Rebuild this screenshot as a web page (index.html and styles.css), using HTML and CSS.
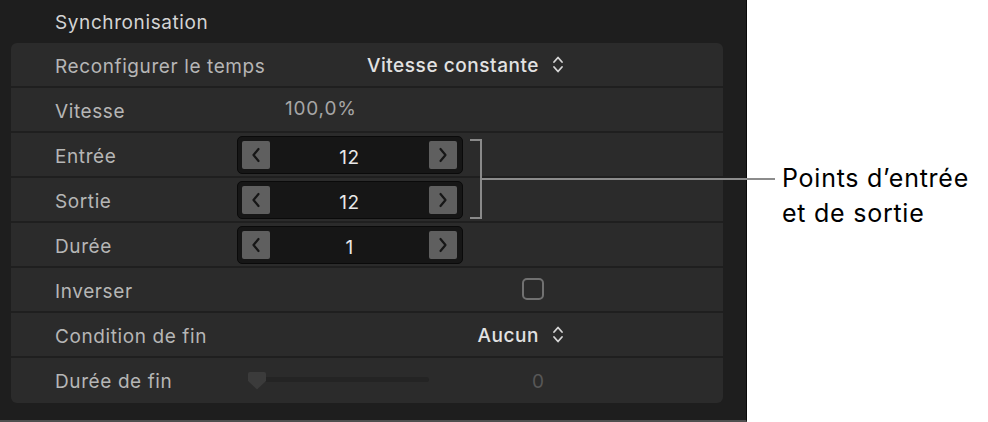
FILE: index.html
```html
<!DOCTYPE html>
<html lang="fr">
<head>
<meta charset="utf-8">
<title>Synchronisation</title>
<link rel="stylesheet" href="styles.css">
</head>
<body>
<div class="page">
  <section class="panel">
    <div class="header">Synchronisation</div>
    <div class="card">
      <div class="row">
        <span class="label">Reconfigurer le temps</span>
        <div class="ctl end">
          <span class="popup">Vitesse constante</span>
          <svg class="updown" viewBox="0 0 12 19" width="12" height="19"><path d="M2 7 L6 2.5 L10 7 M2 12 L6 16.5 L10 12"/></svg>
        </div>
      </div>
      <div class="row">
        <span class="label">Vitesse</span>
        <div class="ctl value-cell"><span class="value">100,0%</span></div>
      </div>
      <div class="row">
        <span class="label">Entrée</span>
        <div class="ctl">
          <div class="stepper">
            <span class="step-btn"><svg viewBox="0 0 10 16" width="10" height="16"><path d="M7.5 2 L2.5 8 L7.5 14"/></svg></span>
            <span class="step-num">12</span>
            <span class="step-btn"><svg viewBox="0 0 10 16" width="10" height="16"><path d="M2.5 2 L7.5 8 L2.5 14"/></svg></span>
          </div>
        </div>
      </div>
      <div class="row">
        <span class="label">Sortie</span>
        <div class="ctl">
          <div class="stepper">
            <span class="step-btn"><svg viewBox="0 0 10 16" width="10" height="16"><path d="M7.5 2 L2.5 8 L7.5 14"/></svg></span>
            <span class="step-num">12</span>
            <span class="step-btn"><svg viewBox="0 0 10 16" width="10" height="16"><path d="M2.5 2 L7.5 8 L2.5 14"/></svg></span>
          </div>
        </div>
      </div>
      <div class="row">
        <span class="label">Durée</span>
        <div class="ctl">
          <div class="stepper">
            <span class="step-btn"><svg viewBox="0 0 10 16" width="10" height="16"><path d="M7.5 2 L2.5 8 L7.5 14"/></svg></span>
            <span class="step-num">1</span>
            <span class="step-btn"><svg viewBox="0 0 10 16" width="10" height="16"><path d="M2.5 2 L7.5 8 L2.5 14"/></svg></span>
          </div>
        </div>
      </div>
      <div class="row">
        <span class="label">Inverser</span>
        <div class="ctl end check-cell"><span class="checkbox"></span></div>
      </div>
      <div class="row">
        <span class="label">Condition de fin</span>
        <div class="ctl end">
          <span class="popup">Aucun</span>
          <svg class="updown" viewBox="0 0 12 19" width="12" height="19"><path d="M2 7 L6 2.5 L10 7 M2 12 L6 16.5 L10 12"/></svg>
        </div>
      </div>
      <div class="row last">
        <span class="label">Durée de fin</span>
        <div class="ctl slider-cell">
          <div class="slider">
            <span class="track"></span>
            <svg class="thumb" viewBox="0 0 18 18" width="18" height="18"><path d="M2 0 H16 Q18 0 18 2 V9 L9 17.5 L0 9 V2 Q0 0 2 0 Z"/></svg>
          </div>
          <span class="dim-num">0</span>
        </div>
      </div>
    </div>
  </section>

  <div class="callout">
    <span class="bracket"></span>
    <span class="leader"></span>
    <p class="note">Points d’entrée<br>et de sortie</p>
  </div>
</div>
</body>
</html>
```

FILE: styles.css
```css
* { box-sizing: border-box; }

html, body {
  margin: 0;
  padding: 0;
  background: #ffffff;
}

body {
  font-family: Inter, "Liberation Sans", Arial, sans-serif;
  width: 988px;
  height: 422px;
  overflow: hidden;
}

.page {
  position: relative;
  width: 988px;
  height: 422px;
}

.panel {
  width: 747px;
  height: 422px;
  background: #1e1e1e;
  border-right: 1px solid #0a0a0a;
  border-bottom: 2px solid #4f4f4f;
}

.header {
  height: 43px;
  padding-left: 55px;
  display: flex;
  align-items: center;
  color: #d4d4d4;
  font-size: 19px;
  letter-spacing: 0.6px;
  padding-top: 1px;
  white-space: nowrap;
}

.card {
  margin-left: 11px;
  width: 712px;
  background: #2b2b2b;
  border-radius: 6px;
  padding-bottom: 2px;
}

.row {
  display: grid;
  grid-template-columns: 226px 327px 1fr;
  align-items: center;
  height: 45px;
  border-bottom: 2px solid #1f1f1f;
}

.row.last {
  border-bottom: none;
  height: 43px;
}

.label {
  padding-left: 44px;
  color: #b6b6b6;
  font-size: 19px;
  letter-spacing: 0.6px;
  padding-top: 4px;
  white-space: nowrap;
}

.ctl {
  display: flex;
  align-items: center;
  height: 100%;
}

.ctl.end {
  justify-content: flex-end;
  gap: 13px;
}

.popup {
  color: #e2e2e2;
  font-weight: 500;
  font-size: 19px;
  letter-spacing: 0.55px;
  padding-top: 2px;
  white-space: nowrap;
}

.updown {
  fill: none;
  stroke: #d6d6d6;
  stroke-width: 1.8;
  stroke-linecap: round;
  stroke-linejoin: round;
}

.value-cell {
  padding-left: 48px;
}

.value {
  color: #a6a6a6;
  font-size: 19px;
  letter-spacing: 0.8px;
  padding-bottom: 2px;
}

.stepper {
  width: 226px;
  height: 38px;
  background: #161616;
  border: 1px solid #0a0a0a;
  border-radius: 5px;
  display: flex;
  align-items: center;
  padding: 0 5px 0 4px;
}

.step-btn {
  width: 28px;
  height: 28px;
  background: #5f5f5f;
  border-radius: 2px;
  display: flex;
  align-items: center;
  justify-content: center;
}

.step-btn svg {
  fill: none;
  stroke: #161616;
  stroke-width: 2.2;
  stroke-linecap: round;
  stroke-linejoin: round;
}

.step-num {
  flex: 1;
  text-align: center;
  color: #e8e8e8;
  font-size: 19px;
  letter-spacing: 0.5px;
  padding-top: 6px;
}

.check-cell {
  padding-right: 20px;
  padding-bottom: 2px;
}

.checkbox {
  width: 22px;
  height: 22px;
  border: 2px solid #717171;
  border-radius: 5px;
}

.slider-cell {
  justify-content: space-between;
  padding-left: 11px;
  padding-right: 20px;
}

.slider {
  position: relative;
  width: 181px;
  height: 18px;
  display: flex;
  align-items: center;
}

.track {
  width: 100%;
  height: 5px;
  background: #242424;
  border-radius: 3px;
}

.thumb {
  position: absolute;
  left: 0;
  top: 1px;
  fill: #3b3b3b;
}

.dim-num {
  color: #575757;
  font-size: 19px;
  padding-top: 4px;
}

.callout {
  position: absolute;
  left: 0;
  top: 0;
  width: 988px;
  height: 422px;
  pointer-events: none;
}

.bracket {
  position: absolute;
  left: 470px;
  top: 139px;
  width: 12px;
  height: 80px;
  border: 2px solid #8a8a8a;
  border-left: none;
}

.leader {
  position: absolute;
  left: 482px;
  top: 178px;
  width: 293px;
  height: 2px;
  background: #8c8c8c;
}

.note {
  position: absolute;
  left: 782px;
  top: 161px;
  margin: 0;
  color: #000000;
  font-size: 25px;
  line-height: 35px;
  letter-spacing: 0.75px;
}
```
